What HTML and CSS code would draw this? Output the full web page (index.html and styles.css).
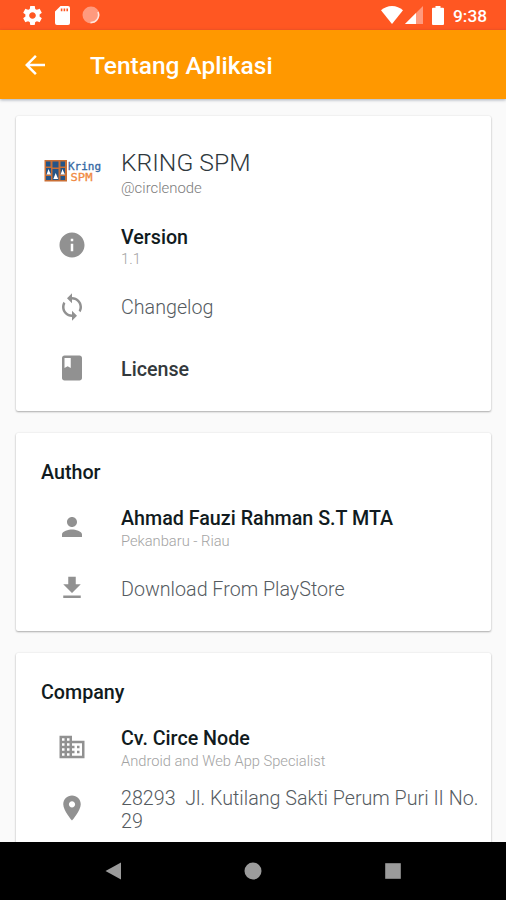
FILE: index.html
```html
<!DOCTYPE html>
<html lang="id">
<head>
<meta charset="utf-8">
<title>Tentang Aplikasi</title>
<link rel="stylesheet" href="styles.css">
</head>
<body>
<div class="screen">
  <div class="status">
    <div class="status-left">
      <svg class="s-gear" viewBox="2 2 20 20"><path fill-rule="evenodd" d="M19.43 12.98c.04-.32.07-.64.07-.98s-.03-.66-.07-.98l2.11-1.65c.19-.15.24-.42.12-.64l-2-3.46c-.12-.22-.39-.3-.61-.22l-2.49 1c-.52-.4-1.08-.73-1.69-.98l-.38-2.65C14.46 2.18 14.25 2 14 2h-4c-.25 0-.46.18-.49.42l-.38 2.65c-.61.25-1.17.59-1.69.98l-2.49-1c-.23-.09-.49 0-.61.22l-2 3.46c-.13.22-.07.49.12.64l2.11 1.65c-.04.32-.07.65-.07.98s.03.66.07.98l-2.11 1.65c-.19.15-.24.42-.12.64l2 3.46c.12.22.39.3.61.22l2.49-1c.52.4 1.08.73 1.69.98l.38 2.65c.03.24.24.42.49.42h4c.25 0 .46-.18.49-.42l.38-2.65c.61-.25 1.17-.59 1.69-.98l2.49 1c.23.09.49 0 .61-.22l2-3.46c.12-.22.07-.49-.12-.64l-2.11-1.65zM12 15.5c-1.93 0-3.5-1.57-3.5-3.5s1.57-3.5 3.5-3.5 3.5 1.57 3.5 3.5-1.57 3.5-3.5 3.5z"/></svg>
      <svg class="s-sd" viewBox="0 0 15 19"><path fill-rule="evenodd" d="M5.500 0H13a2 2 0 0 1 2 2v15a2 2 0 0 1-2 2H2a2 2 0 0 1-2-2V5.500zM5.800 2.500h1.600v2.800H5.800zM8.600 2.500h1.600v2.800H8.600zM11.400 2.500H13v2.800h-1.600z"/></svg>
      <svg class="s-sync" viewBox="0 0 18 18"><circle cx="9" cy="9" r="8.500" fill="#ff9a7e"/><path d="M16 6a7.600 7.600 0 0 1-7.500 10.500" fill="none" stroke="#ffe6df" stroke-width="1.500"/></svg>
    </div>
    <div class="status-right">
      <svg class="s-wifi" viewBox="0 0 22 18"><path d="M11 18L0 4.300C3 1.600 6.800 0 11 0s8 1.600 11 4.300z"/></svg>
      <svg class="s-cell" viewBox="0 0 18 18"><path d="M18 0v18H0z" fill="#ff9a7e"/><path d="M11 7v11H0z"/></svg>
      <svg class="s-batt" viewBox="0 0 12 19"><path d="M3.500 0h5v1.800H11a1 1 0 0 1 1 1V18a1 1 0 0 1-1 1H1a1 1 0 0 1-1-1V2.800a1 1 0 0 1 1-1h2.500z"/></svg>
      <span class="clock">9:38</span>
    </div>
  </div>
  <header class="appbar">
    <svg class="back" viewBox="4 4 16 16"><path d="M20 11H7.830l5.590-5.590L12 4l-8 8 8 8 1.410-1.410L7.830 13H20v-2z"/></svg>
    <h1>Tentang Aplikasi</h1>
  </header>
  <main class="content">
    <section class="card">
      <div class="row hero">
        <svg class="logo" viewBox="0 0 58 24">
          <rect x="0.500" y="1" width="22.500" height="21.500" fill="#c96f35"/>
          <path d="M2 2.500h4.500v5H2zM8.500 2.500h6v6h-6zM16.500 2.500H21v5h-4.500zM2 9h5v6.500H2zM8.500 10h6v6h-6zM16.500 9H21v6.500h-4.500zM2 17h5v4H2zM8.500 16h6v5h-6zM16.500 17H21v4h-4.500z" fill="#245487"/>
          <path d="M4.500 10l1 2.500 1.500 3H2.500l1.200-3zM11.700 14l1 2.500 1.500 3.500H9.300l1.400-3.500zM18.500 10l1 2.500 1.500 3h-4.500l1.200-3z" fill="#fff"/>
          <text x="24" y="10.500" class="logo-kring" textLength="33" lengthAdjust="spacingAndGlyphs">Kring</text>
          <text x="26.500" y="21.500" class="logo-spm" textLength="22" lengthAdjust="spacingAndGlyphs">SPM</text>
        </svg>
        <div class="text"><div class="app-name">KRING SPM</div><div class="sub handle">@circlenode</div></div>
      </div>
      <div class="row">
        <svg class="icon" viewBox="0 0 24 24"><path d="M12 2C6.480 2 2 6.480 2 12s4.480 10 10 10 10-4.480 10-10S17.520 2 12 2zm1 15h-2v-6h2v6zm0-8h-2V7h2v2z"/></svg>
        <div class="text double"><div class="strong">Version</div><div class="sub">1.1</div></div>
      </div>
      <div class="row">
        <svg class="icon" viewBox="0 0 24 24"><path d="M12 4V1L8 5l4 4V6c3.310 0 6 2.690 6 6 0 1.010-.25 1.970-.7 2.800l1.460 1.460C19.540 15.030 20 13.570 20 12c0-4.420-3.580-8-8-8zm0 14c-3.310 0-6-2.690-6-6 0-1.010.25-1.970.7-2.800L5.240 7.740C4.460 8.970 4 10.430 4 12c0 4.420 3.580 8 8 8v3l4-4-4-4v3z"/></svg>
        <div class="text single"><div class="light">Changelog</div></div>
      </div>
      <div class="row">
        <svg class="icon" viewBox="0 0 24 24"><path d="M18 2H6c-1.100 0-2 .9-2 2v16c0 1.100.9 2 2 2h12c1.100 0 2-.9 2-2V4c0-1.100-.9-2-2-2zM6 4h5v8l-2.500-1.500L6 12V4z"/></svg>
        <div class="text"><div class="strong license">License</div></div>
      </div>
    </section>
    <section class="card">
      <h2>Author</h2>
      <div class="row">
        <svg class="icon" viewBox="0 0 24 24"><path d="M12 12c2.210 0 4-1.790 4-4s-1.790-4-4-4-4 1.790-4 4 1.790 4 4 4zm0 2c-2.670 0-8 1.340-8 4v2h16v-2c0-2.660-5.330-4-8-4z"/></svg>
        <div class="text double"><div class="strong">Ahmad Fauzi Rahman S.T MTA</div><div class="sub">Pekanbaru - Riau</div></div>
      </div>
      <div class="row">
        <svg class="icon" viewBox="0 0 24 24"><path d="M19 9h-4V3H9v6H5l7 7 7-7zM5 18v2h14v-2H5z"/></svg>
        <div class="text"><div class="light">Download From PlayStore</div></div>
      </div>
    </section>
    <section class="card">
      <h2>Company</h2>
      <div class="row">
        <svg class="icon" viewBox="0 0 24 24"><path d="M12 7V3H2v18h20V7H12zM6 19H4v-2h2v2zm0-4H4v-2h2v2zm0-4H4V9h2v2zm0-4H4V5h2v2zm4 12H8v-2h2v2zm0-4H8v-2h2v2zm0-4H8V9h2v2zm0-4H8V5h2v2zm10 12h-8v-2h2v-2h-2v-2h2v-2h-2V9h8v10zm-2-8h-2v2h2v-2zm0 4h-2v2h2v-2z"/></svg>
        <div class="text double"><div class="strong">Cv. Circe Node</div><div class="sub">Android and Web App Specialist</div></div>
      </div>
      <div class="row">
        <svg class="icon" viewBox="0 0 24 24"><path d="M12 2C8.130 2 5 5.130 5 9c0 5.250 7 13 7 13s7-7.750 7-13c0-3.870-3.130-7-7-7zm0 9.500c-1.380 0-2.500-1.120-2.500-2.500s1.120-2.500 2.500-2.500 2.500 1.120 2.500 2.500-1.120 2.500-2.500 2.500z"/></svg>
        <div class="text address"><div class="light">28293&nbsp; Jl. Kutilang Sakti Perum Puri II No. 29</div></div>
      </div>
    </section>
  </main>
  <nav class="navbar">
    <svg viewBox="0 0 18 18"><path d="M17 .5v17L1.500 9z"/></svg>
    <svg viewBox="0 0 18 18"><circle cx="9" cy="9" r="8.500"/></svg>
    <svg viewBox="0 0 18 18"><path d="M1.200 1.200h15.600v15.600H1.200z"/></svg>
  </nav>
</div>
</body>
</html>
```

FILE: styles.css
```css
* { box-sizing: border-box; }

body {
  margin: 0;
  font-family: Roboto, "Liberation Sans", sans-serif;
  color: #111b20;
}

svg { display: block; flex: none; }

.screen {
  width: 506px;
  height: 900px;
  display: flex;
  flex-direction: column;
  overflow: hidden;
  background: #fafafa;
}

.status {
  flex: none;
  height: 30px;
  padding: 0 18px 0 23px;
  display: flex;
  justify-content: space-between;
  align-items: center;
  background: #ff5722;
  fill: #fff;
  color: #fff;
}
.status-left, .status-right { display: flex; align-items: center; }
.s-gear { width: 19px; height: 19px; }
.s-sd { width: 15px; height: 19px; margin-left: 13px; }
.s-sync { width: 18px; height: 18px; margin-left: 12px; }
.s-wifi { width: 22px; height: 18px; }
.s-cell { width: 18px; height: 18px; margin-left: 2px; }
.s-batt { width: 12px; height: 19px; margin-left: 9px; }
.clock {
  margin-left: 9px;
  width: 35px;
  padding-top: 2px;
  font-size: 17.3px;
  font-weight: 500;
  line-height: 28px;
  white-space: nowrap;
}

.appbar {
  flex: none;
  height: 69px;
  padding-left: 25px;
  display: flex;
  align-items: center;
  background: #ff9800;
  box-shadow: 0 1px 3px rgba(0, 30, 60, .35);
  z-index: 1;
}
.back { width: 20px; height: 20px; fill: #fff; }
.appbar h1 {
  margin: 0 0 0 45px;
  padding-top: 3px;
  font-size: 24.5px;
  font-weight: 500;
  line-height: 30px;
  color: #fff;
}

.content {
  flex: 1;
  min-height: 0;
  padding: 17px 15px 0 16px;
  display: flex;
  flex-direction: column;
  gap: 22px;
  overflow: hidden;
}
.card {
  flex: none;
  padding: 12px 0;
  background: #fff;
  border-radius: 2px;
  box-shadow: 0 1px 2px rgba(0, 0, 0, .3), 0 0 2px rgba(0, 0, 0, .08);
}
.card h2 {
  margin: 0;
  padding: 4px 0 0 25px;
  font-size: 19.7px;
  font-weight: 500;
  line-height: 47px;
}
.row {
  height: 61.5px;
  padding-left: 41px;
  display: flex;
  align-items: center;
}
.hero { height: 86.5px; padding-left: 28px; }
.icon { width: 30px; height: 30px; fill: #919191; }
.logo { width: 58px; height: 24px; }
.logo-kring, .logo-spm { font-family: "DejaVu Sans Mono", monospace; }
.logo-kring { font-size: 10.5px; fill: #3568a3; stroke: #3568a3; stroke-width: .3px; }
.logo-spm { font-size: 11px; fill: #f08a43; stroke: #f08a43; stroke-width: .3px; }
.text { margin: 0 4px 0 34px; padding-top: 3px; }
.text.single { padding-top: 2px; }
.text.double { padding-top: 4.5px; }
.text.address { padding-top: 4px; }
.hero .text { margin-left: 19px; padding-top: 3px; }

.app-name { font-size: 24.7px; font-weight: 300; line-height: 30px; color: #2e383d; }
.strong { font-size: 19.7px; font-weight: 500; line-height: 23.5px; }
.light { font-size: 19.7px; font-weight: 300; line-height: 23.5px; color: #555b5f; }
.license { color: #33393c; }
.sub { padding-top: 1px; font-size: 14.7px; font-weight: 300; line-height: 19.5px; color: #a3a3a3; }
.handle { font-size: 14.9px; color: #7c7c7c; }

.navbar {
  flex: none;
  height: 58px;
  padding: 0 104px;
  display: flex;
  justify-content: space-between;
  align-items: center;
  background: #000;
  fill: #9b9b9b;
  z-index: 1;
}
.navbar svg { width: 18px; height: 18px; }
```
